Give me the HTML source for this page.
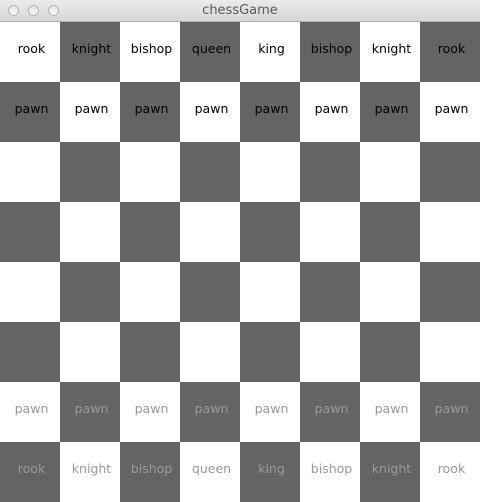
<!DOCTYPE html>
<html><head><style>
body{margin:0;width:480px;height:502px;overflow:hidden;background:#fff;font-family:"DejaVu Sans","Liberation Sans",sans-serif;}
.t{height:22px;background:linear-gradient(#ececec,#d6d6d6);border-bottom:1px solid #b0b0b0;box-sizing:border-box;position:relative;}
.t .c{position:absolute;top:5px;width:11px;height:11px;border-radius:50%;border:1px solid #b5b5b5;background:linear-gradient(#e4e4e4,#f6f6f6);box-sizing:border-box;}
.t .n{position:absolute;left:0;right:0;top:3px;text-align:center;font-size:13px;color:#5a5a5a;}
.b{display:grid;grid-template-columns:repeat(8,60px);grid-auto-rows:60px;}
.b div{display:flex;align-items:center;justify-content:center;font-size:12.5px;padding-bottom:8px;padding-left:3px;box-sizing:border-box;}
.d{background:#646464}
.k{color:#000}.g{color:#999}
</style></head><body>
<div class="t"><span class="c" style="left:8px"></span><span class="c" style="left:28px"></span><span class="c" style="left:48px"></span><div class="n">chessGame</div></div>
<div class="b">
<div class="k">rook</div><div class="d k">knight</div><div class="k">bishop</div><div class="d k">queen</div><div class="k">king</div><div class="d k">bishop</div><div class="k">knight</div><div class="d k">rook</div>
<div class="d k">pawn</div><div class="k">pawn</div><div class="d k">pawn</div><div class="k">pawn</div><div class="d k">pawn</div><div class="k">pawn</div><div class="d k">pawn</div><div class="k">pawn</div>
<div></div><div class="d"></div><div></div><div class="d"></div><div></div><div class="d"></div><div></div><div class="d"></div>
<div class="d"></div><div></div><div class="d"></div><div></div><div class="d"></div><div></div><div class="d"></div><div></div>
<div></div><div class="d"></div><div></div><div class="d"></div><div></div><div class="d"></div><div></div><div class="d"></div>
<div class="d"></div><div></div><div class="d"></div><div></div><div class="d"></div><div></div><div class="d"></div><div></div>
<div class="g">pawn</div><div class="d g">pawn</div><div class="g">pawn</div><div class="d g">pawn</div><div class="g">pawn</div><div class="d g">pawn</div><div class="g">pawn</div><div class="d g">pawn</div>
<div class="d g">rook</div><div class="g">knight</div><div class="d g">bishop</div><div class="g">queen</div><div class="d g">king</div><div class="g">bishop</div><div class="d g">knight</div><div class="g">rook</div>
</div>
</body></html>
